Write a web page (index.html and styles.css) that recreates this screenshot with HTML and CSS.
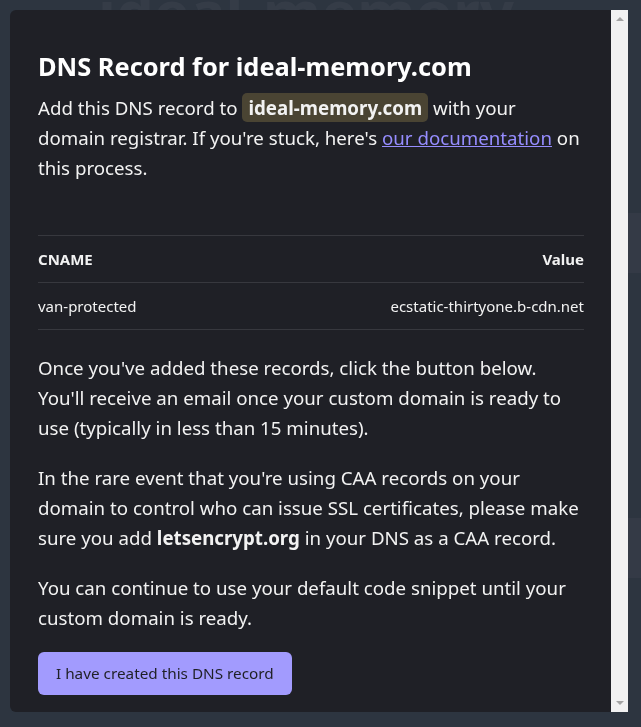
FILE: index.html
```html
<!DOCTYPE html>
<html lang="en">
<head>
    <meta charset="UTF-8">
    <meta name="viewport" content="width=device-width, initial-scale=1.0">
    <title>DNS Record</title>
    <link rel="stylesheet" href="styles.css">
</head>
<body>
    <div class="page">
        <h1 class="page-title">ideal-memory</h1>
        <div class="page-card"></div>
        <div class="page-card second"></div>
    </div>

    <div class="modal">
        <div class="modal-body">
            <h2>DNS Record for ideal-memory.com</h2>
            <p>
                Add this DNS record to <code class="domain">ideal-memory.com</code> with your
                domain registrar. If you're stuck, here's <a href="#">our documentation</a> on
                this process.
            </p>

            <table class="records">
                <thead>
                    <tr>
                        <th>CNAME</th>
                        <th class="right">Value</th>
                    </tr>
                </thead>
                <tbody>
                    <tr>
                        <td>van-protected</td>
                        <td class="right">ecstatic-thirtyone.b-cdn.net</td>
                    </tr>
                </tbody>
            </table>

            <p>
                Once you've added these records, click the button below.
                You'll receive an email once your custom domain is ready to
                use (typically in less than 15 minutes).
            </p>
            <p>
                In the rare event that you're using CAA records on your
                domain to control who can issue SSL certificates, please make
                sure you add <strong>letsencrypt.org</strong> in your DNS as a CAA record.
            </p>
            <p>
                You can continue to use your default code snippet until your
                custom domain is ready.
            </p>

            <button>I have created this DNS record</button>
        </div>
        <div class="scrollbar">
            <span class="arrow up"></span>
            <span class="arrow down"></span>
        </div>
    </div>
</body>
</html>
```

FILE: styles.css
```css
body {
    margin: 0;
    font-family: "Segoe UI", "Noto Sans", sans-serif;
    background-color: #2d3540;
    color: #f2f2f2;
}

/* page behind the modal */
.page {
    padding: 0 0 0 20px;
}

.page-title {
    margin: -19px 0 0 78px;
    font-size: 60px;
    line-height: 60px;
    font-weight: bold;
    color: #353c47;
}

.page-card {
    height: 60px;
    margin-top: 172px;
    background-color: #343a46;
}

.page-card.second {
    margin-top: 245px;
}

/* modal */
.modal {
    position: fixed;
    top: 10px;
    left: 10px;
    width: 618px;
    height: 702px;
    display: flex;
    background-color: #1f2026;
    border-radius: 6px 0 0 6px;
    overflow: hidden;
}

.modal-body {
    flex: 1;
    padding: 38px 27px 17px 28px;
    overflow-y: auto;
}

.scrollbar {
    width: 17px;
    display: flex;
    flex-direction: column;
    justify-content: space-between;
    align-items: center;
    padding: 7px 0;
    box-sizing: border-box;
    background-color: #f1f1f1;
}

.arrow {
    width: 0;
    height: 0;
    border-left: 4px solid transparent;
    border-right: 4px solid transparent;
}

.arrow.up {
    border-bottom: 4px solid #a3a3a3;
}

.arrow.down {
    border-top: 4px solid #a3a3a3;
}

.modal h2 {
    margin: 0 0 9px;
    font-size: 25.4px;
    line-height: 36px;
    font-weight: bold;
    color: #fff;
}

.modal p {
    margin: 0 0 20px;
    font-size: 18.7px;
    line-height: 30px;
}

.domain {
    display: inline-block;
    padding: 0 6px;
    font-family: inherit;
    font-weight: bold;
    line-height: 29px;
    background-color: #4a4433;
    border-radius: 5px;
}

a {
    color: #968dff;
    text-decoration: underline;
}

.records {
    width: 100%;
    margin: 52px 0 23px;
    border-collapse: collapse;
    font-size: 15px;
}

.records th,
.records td {
    padding: 13px 0;
    text-align: left;
    border-top: 1px solid #37383e;
    border-bottom: 1px solid #37383e;
    line-height: 20px;
}

.records th {
    font-weight: bold;
}

.records .right {
    text-align: right;
}

button {
    display: block;
    margin-top: -1px;
    padding: 11px 18px;
    font-family: inherit;
    font-size: 15.3px;
    line-height: 21px;
    color: #1f2026;
    background-color: #a29bfe;
    border: none;
    border-radius: 6px;
    cursor: pointer;
}
```
